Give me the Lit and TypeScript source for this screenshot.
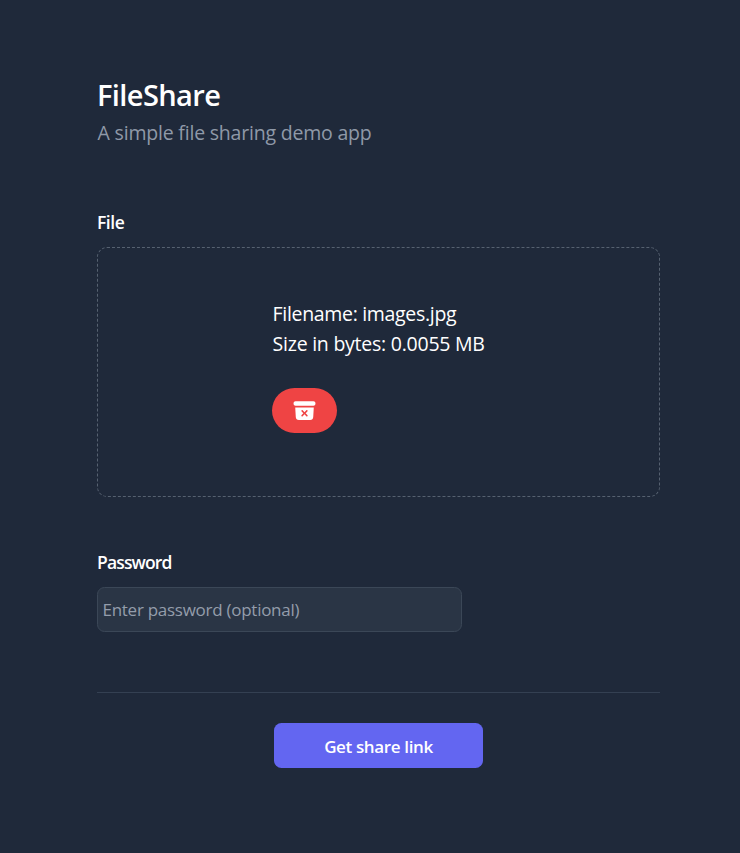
import { LitElement, html, css } from "lit";
import { customElement, property } from "lit/decorators.js";

@customElement("file-card")
export class FileCard extends LitElement {
  @property() name = "";
  @property() size = "";

  static styles = css`
    :host {
      display: flex;
      justify-content: center;
      box-sizing: border-box;
      height: 250px;
      padding-top: 51px;
      border: 1px dashed #566170;
      border-radius: 10px;
    }
    .content {
      width: 213px;
      white-space: nowrap;
      font-size: 19.5px;
      line-height: 30px;
    }
    .name,
    .size {
      padding-left: 0.6px;
    }
    .name {
      letter-spacing: -0.32px;
    }
    .size {
      letter-spacing: -0.24px;
    }
    .remove {
      display: flex;
      align-items: center;
      justify-content: center;
      width: 65px;
      height: 45px;
      margin: 29px 0 0;
      padding: 0;
      border: 0;
      border-radius: 22.5px;
      background: #ef4444;
      color: #fff;
    }
    .icon {
      width: 25px;
      height: 25px;
    }
  `;

  render() {
    return html`
      <div class="content">
        <div class="name">Filename: ${this.name}</div>
        <div class="size">Size in bytes: ${this.size}</div>
        <button class="remove" type="button" aria-label="Remove file">
          <svg class="icon" viewBox="0 0 24 24" fill="currentColor" aria-hidden="true">
            <path d="M3.375 3C2.339 3 1.5 3.84 1.5 4.875v.75c0 1.036.84 1.875 1.875 1.875h17.25c1.035 0 1.875-.84 1.875-1.875v-.75C22.5 3.839 21.66 3 20.625 3H3.375z" />
            <path
              fill-rule="evenodd"
              clip-rule="evenodd"
              d="M3.087 9l.54 9.176A3 3 0 006.62 21h10.757a3 3 0 002.995-2.824L20.913 9H3.087zm6.133 2.845a.75.75 0 011.06 0l1.72 1.72 1.72-1.72a.75.75 0 111.06 1.06l-1.72 1.72 1.72 1.72a.75.75 0 11-1.06 1.06L12 15.685l-1.72 1.72a.75.75 0 11-1.06-1.06l1.72-1.72-1.72-1.72a.75.75 0 010-1.06z"
            />
          </svg>
        </button>
      </div>
    `;
  }
}

@customElement("app-root")
export class AppRoot extends LitElement {
  static styles = css`
    :host {
      display: block;
      box-sizing: border-box;
      min-height: 853px;
      padding: 75px 80px 85px 97px;
      background: #1f293a;
      color: #fff;
      font-family: "Open Sans", "Noto Sans", sans-serif;
    }
    .title {
      margin: 0;
      font-size: 29px;
      font-weight: 600;
      line-height: 40px;
      letter-spacing: -0.6px;
    }
    .subtitle {
      margin: 2.5px 0 0;
      padding-left: 0.6px;
      color: #8f99a8;
      font-size: 19.5px;
      line-height: 30px;
      letter-spacing: -0.2px;
    }
    .label {
      display: block;
      margin-bottom: 12px;
      font-size: 17.5px;
      font-weight: 600;
      line-height: 25px;
    }
    .file {
      margin-top: 62.5px;
      letter-spacing: -0.45px;
    }
    .password {
      margin-top: 53px;
      letter-spacing: -0.84px;
    }
    .input {
      display: block;
      box-sizing: border-box;
      width: 365px;
      height: 45px;
      padding: 0 4.5px;
      border: 1px solid #3b4757;
      border-radius: 7.5px;
      outline: 0;
      background: #2a3545;
      color: #fff;
      font: 17px "Open Sans", "Noto Sans", sans-serif;
      letter-spacing: -0.27px;
    }
    .input::placeholder {
      color: #949dab;
      opacity: 1;
    }
    .footer {
      display: flex;
      justify-content: center;
      margin-top: 60px;
      padding-top: 30px;
      border-top: 1px solid #344052;
    }
    .submit {
      width: 209px;
      height: 45px;
      padding: 2px 0 0;
      border: 0;
      border-radius: 7.5px;
      background: #6366f1;
      color: #fff;
      font: 600 17px "Open Sans", "Noto Sans", sans-serif;
      letter-spacing: -0.36px;
    }
  `;

  render() {
    return html`
      <h1 class="title">FileShare</h1>
      <p class="subtitle">A simple file sharing demo app</p>
      <div class="label file">File</div>
      <file-card name="images.jpg" size="0.0055 MB"></file-card>
      <label class="label password" for="password">Password</label>
      <input class="input" id="password" type="password" placeholder="Enter password (optional)" />
      <div class="footer">
        <button class="submit" type="button">Get share link</button>
      </div>
    `;
  }
}
